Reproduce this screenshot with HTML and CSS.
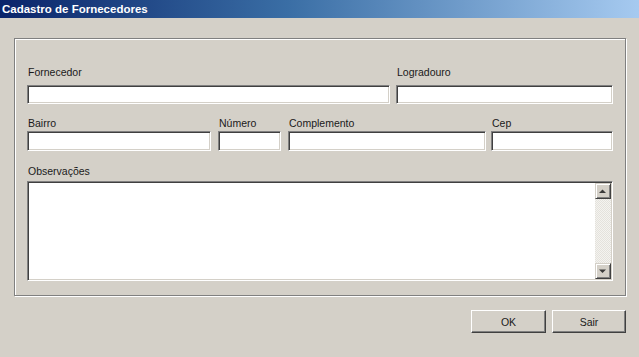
FILE: index.html
```html
<!DOCTYPE html>
<html lang="pt">
<head>
<meta charset="utf-8">
<title>Cadastro de Fornecedores</title>
<link rel="stylesheet" href="styles.css">
</head>
<body>
<div class="window">
  <div class="titlebar">Cadastro de Fornecedores</div>
  <div class="client">
    <div class="group">
      <div class="row row-1">
        <div class="field w-fornecedor">
          <label class="lbl">Fornecedor</label>
          <input class="edit" type="text">
        </div>
        <div class="field w-logradouro">
          <label class="lbl">Logradouro</label>
          <input class="edit" type="text">
        </div>
      </div>
      <div class="row row-2">
        <div class="field w-bairro">
          <label class="lbl">Bairro</label>
          <input class="edit" type="text">
        </div>
        <div class="field w-numero">
          <label class="lbl">Número</label>
          <input class="edit" type="text">
        </div>
        <div class="field w-complemento">
          <label class="lbl">Complemento</label>
          <input class="edit" type="text">
        </div>
        <div class="field w-cep">
          <label class="lbl">Cep</label>
          <input class="edit" type="text">
        </div>
      </div>
      <div class="row row-3">
        <div class="field w-full">
          <label class="lbl">Observações</label>
          <div class="memo">
            <textarea class="memo-text"></textarea>
            <div class="scrollbar">
              <div class="sb-btn">
                <svg width="16" height="16" viewBox="0 0 16 16"><path d="M4 10 L11 10 L7.5 6.5 Z" fill="#3a3a3a"/></svg>
              </div>
              <div class="sb-track"></div>
              <div class="sb-btn">
                <svg width="16" height="16" viewBox="0 0 16 16"><path d="M4 6.5 L11 6.5 L7.5 10 Z" fill="#3a3a3a"/></svg>
              </div>
            </div>
          </div>
        </div>
      </div>
    </div>
    <div class="actions">
      <button class="btn btn-ok" type="button">OK</button>
      <button class="btn btn-sair" type="button">Sair</button>
    </div>
  </div>
</div>
</body>
</html>
```

FILE: styles.css
```css
html, body {
  margin: 0;
  padding: 0;
  background: #d4d0c8;
}

body {
  width: 639px;
  height: 357px;
  overflow: hidden;
  font-family: "Liberation Sans", Arial, sans-serif;
  font-size: 10.5px;
  color: #1a1a1a;
}

.window {
  display: flex;
  flex-direction: column;
  height: 357px;
}

.titlebar {
  height: 18px;
  line-height: 18px;
  padding-left: 2px;
  background: linear-gradient(to right, #0a246a 0%, #3a6ea5 45%, #a6caf0 100%);
  color: #ffffff;
  font-weight: bold;
  font-size: 11.5px;
  white-space: nowrap;
}

.client {
  display: flex;
  flex-direction: column;
  padding: 20px 13px 0 14px;
}

.group {
  border: 1px solid #808080;
  box-shadow: inset 1px 1px 0 #ffffff, 1px 1px 0 #ffffff;
  padding: 27px 12px 14px 12px;
  display: flex;
  flex-direction: column;
}

.row {
  display: flex;
}

.row-1 { gap: 6px; }
.row-2 { margin-top: 13px; gap: 7px; }
.row-3 { margin-top: 14px; }

.field {
  display: flex;
  flex-direction: column;
}

.lbl {
  display: block;
  height: 13px;
  line-height: 13px;
  padding-left: 1px;
  white-space: nowrap;
}

.row-1 .lbl { margin-bottom: 6px; }
.row-2 .lbl { margin-bottom: 1px; }
.row-3 .lbl { margin-bottom: 3px; }

.w-fornecedor { width: 363px; }
.w-logradouro { width: 217px; }
.w-bairro { width: 184px; }
.w-numero { width: 63px; }
.w-complemento { width: 198px; margin-right: -2px; }
.w-cep { width: 122px; }
.w-full { width: 586px; }

.edit {
  box-sizing: border-box;
  margin: 0;
  width: 100%;
  height: 19px;
  background: #ffffff;
  border-style: solid;
  border-width: 1px;
  border-color: #808080 #ffffff #ffffff #808080;
  box-shadow: inset 1px 1px 0 #404040, inset -1px -1px 0 #d4d0c8;
  outline: none;
  padding: 0 3px;
  font: inherit;
}

.row-2 .edit { height: 20px; }

.memo {
  box-sizing: border-box;
  height: 100px;
  display: flex;
  background: #ffffff;
  border-style: solid;
  border-width: 1px;
  border-color: #808080 #ffffff #ffffff #808080;
  box-shadow: inset 1px 1px 0 #404040, inset -1px -1px 0 #d4d0c8;
  padding: 1px 1px 1px 1px;
}

.memo-text {
  flex: 1;
  border: none;
  outline: none;
  resize: none;
  margin: 0;
  padding: 2px;
  background: transparent;
  font: inherit;
}

.scrollbar {
  width: 16px;
  display: flex;
  flex-direction: column;
}

.sb-btn {
  box-sizing: border-box;
  width: 16px;
  height: 16px;
  background: #d4d0c8;
  border-style: solid;
  border-width: 1px;
  border-color: #d4d0c8 #404040 #404040 #d4d0c8;
  box-shadow: inset 1px 1px 0 #ffffff, inset -1px -1px 0 #808080;
  display: flex;
  align-items: center;
  justify-content: center;
}

.sb-btn svg {
  display: block;
  margin: -1px;
}

.sb-track {
  flex: 1;
  background-color: #eeede9;
  background-image: repeating-conic-gradient(#f4f3f0 0 25%, #e4e2dc 0 50%);
  background-size: 2px 2px;
}

.actions {
  display: flex;
  justify-content: flex-end;
  gap: 6px;
  margin-top: 14px;
}

.btn {
  box-sizing: border-box;
  height: 23px;
  margin: 0;
  padding: 0;
  background: #d4d0c8;
  border-style: solid;
  border-width: 1px;
  border-color: #ffffff #404040 #404040 #ffffff;
  box-shadow: inset -1px -1px 0 #808080;
  font: inherit;
  color: #1a1a1a;
}

.btn-ok { width: 75px; }
.btn-sair { width: 74px; }
```
